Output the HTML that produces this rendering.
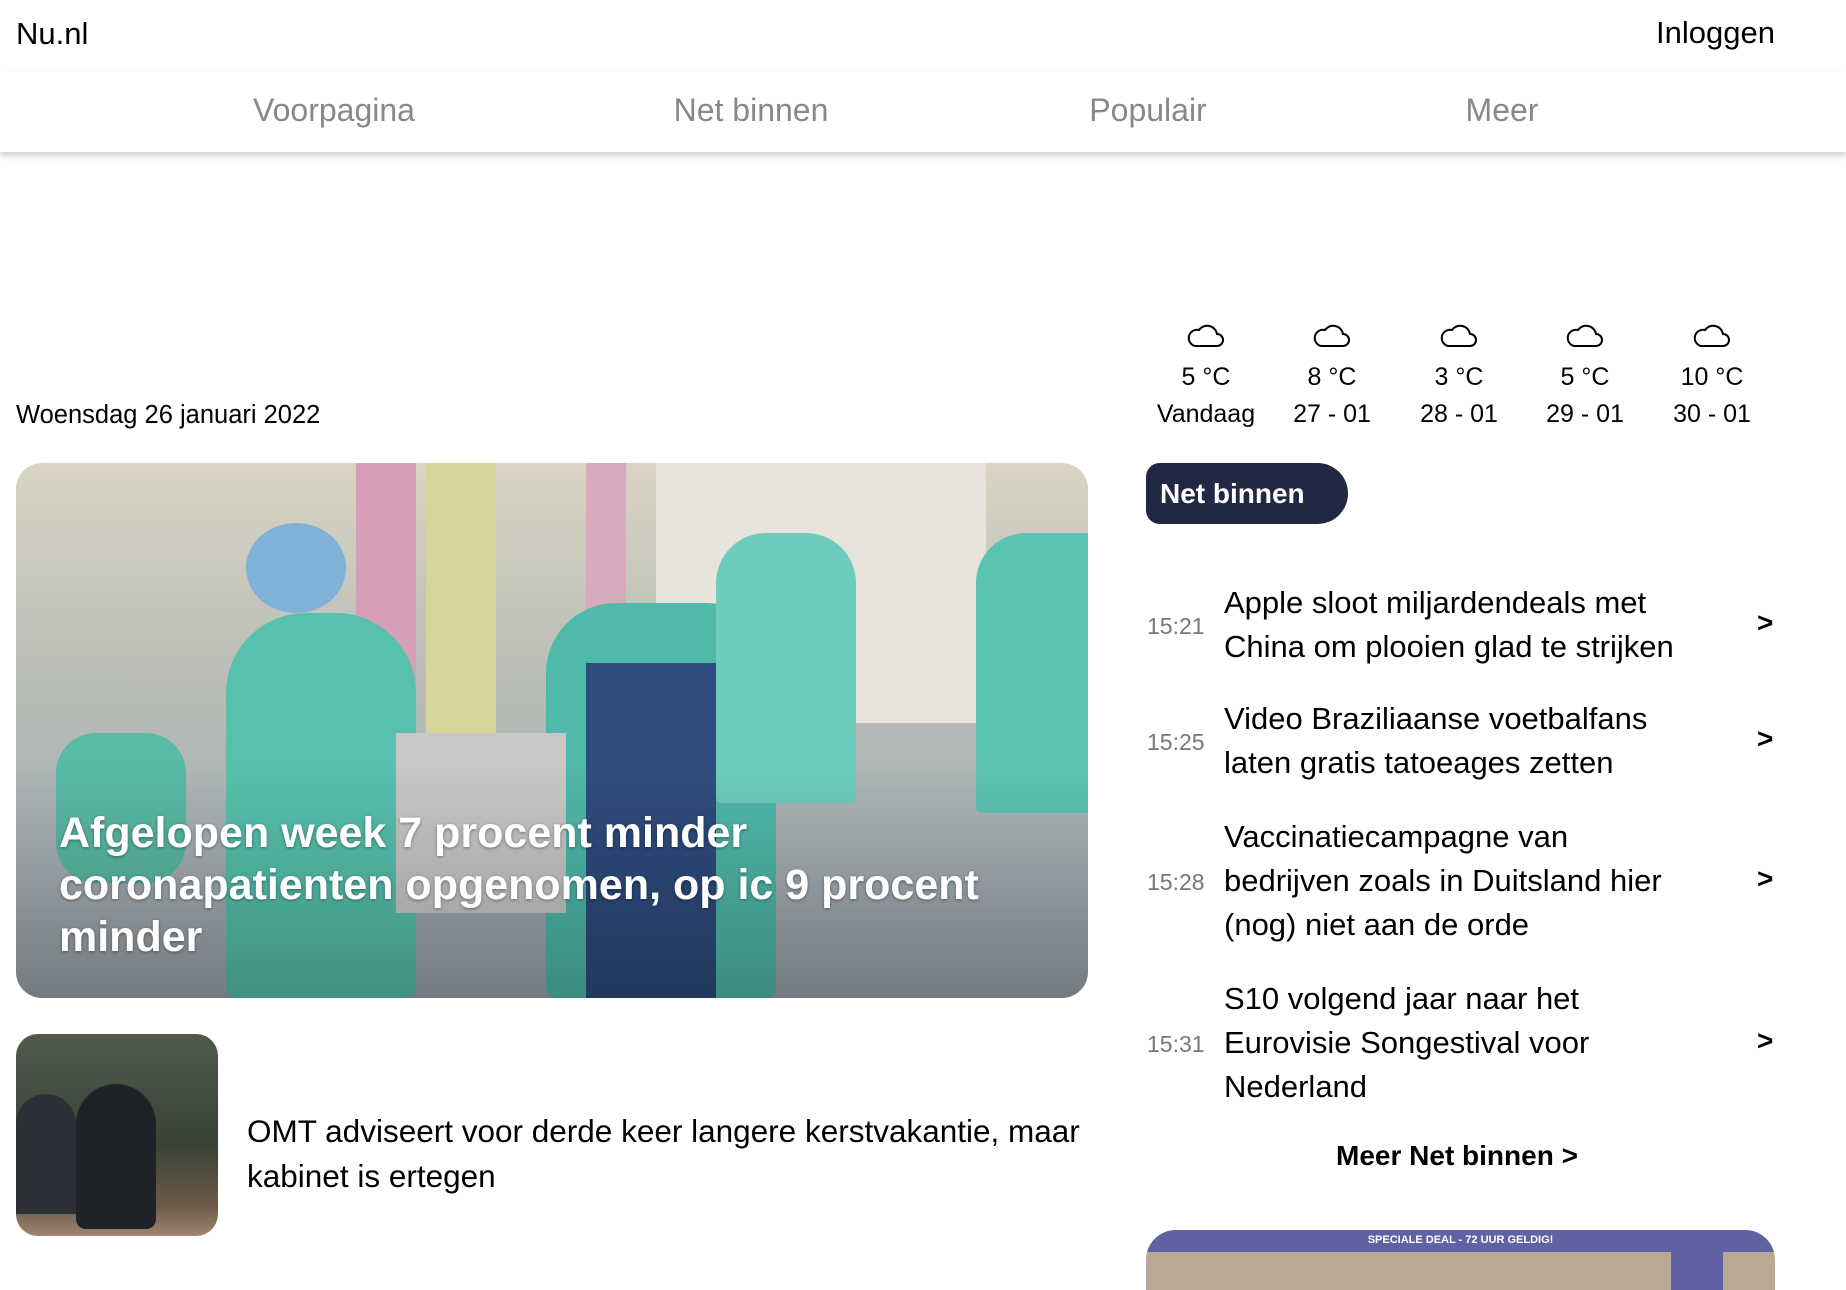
<!DOCTYPE html>
<html><head><meta charset="utf-8"><style>
*{margin:0;padding:0;box-sizing:border-box}
body{width:1846px;height:1264px;overflow:hidden;background:#fff;font-family:"Liberation Sans",Arial,sans-serif;color:#000;position:relative}
.a{position:absolute;white-space:nowrap}
.nav{position:absolute;left:0;top:72px;width:1846px;height:80px;background:#fff;box-shadow:0 4px 6px rgba(0,0,0,.18)}
.nav span{position:absolute;top:20px;font-size:32px;color:#888;transform:translateX(-50%)}
.wc{position:absolute;width:140px;text-align:center;font-size:25px;line-height:37px}
.t{position:absolute;left:1147px;font-size:23px;color:#777}
.h{position:absolute;left:1224px;font-size:31px;line-height:44px;white-space:nowrap}
.ar{position:absolute;left:1757px;font-size:28px;font-weight:bold}
</style></head><body>
<div class="a" style="left:16px;top:16px;font-size:31px">Nu.nl</div>
<div class="a" style="right:71px;top:15px;font-size:31px">Inloggen</div>
<div class="nav">
<span style="left:334px">Voorpagina</span>
<span style="left:751px">Net binnen</span>
<span style="left:1148px">Populair</span>
<span style="left:1502px">Meer</span>
</div>
<div class="a" style="left:16px;top:401px;font-size:25.5px">Woensdag 26 januari 2022</div>

<!-- weather -->
<div class="wc" style="left:1136px;top:322px"><svg width="38" height="26" viewBox="0 0 38 26"><path d="M8 24 H30 A6 6 0 0 0 30 12 A10 10 0 0 0 12 8 A8 8 0 0 0 8 24 Z" fill="none" stroke="#000" stroke-width="2"/></svg><br>5 °C<br>Vandaag</div>
<div class="wc" style="left:1262px;top:322px"><svg width="38" height="26" viewBox="0 0 38 26"><path d="M8 24 H30 A6 6 0 0 0 30 12 A10 10 0 0 0 12 8 A8 8 0 0 0 8 24 Z" fill="none" stroke="#000" stroke-width="2"/></svg><br>8 °C<br>27 - 01</div>
<div class="wc" style="left:1389px;top:322px"><svg width="38" height="26" viewBox="0 0 38 26"><path d="M8 24 H30 A6 6 0 0 0 30 12 A10 10 0 0 0 12 8 A8 8 0 0 0 8 24 Z" fill="none" stroke="#000" stroke-width="2"/></svg><br>3 °C<br>28 - 01</div>
<div class="wc" style="left:1515px;top:322px"><svg width="38" height="26" viewBox="0 0 38 26"><path d="M8 24 H30 A6 6 0 0 0 30 12 A10 10 0 0 0 12 8 A8 8 0 0 0 8 24 Z" fill="none" stroke="#000" stroke-width="2"/></svg><br>5 °C<br>29 - 01</div>
<div class="wc" style="left:1642px;top:322px"><svg width="38" height="26" viewBox="0 0 38 26"><path d="M8 24 H30 A6 6 0 0 0 30 12 A10 10 0 0 0 12 8 A8 8 0 0 0 8 24 Z" fill="none" stroke="#000" stroke-width="2"/></svg><br>10 °C<br>30 - 01</div>

<!-- hero -->
<div style="position:absolute;left:16px;top:463px;width:1072px;height:535px;border-radius:26px;overflow:hidden;background:linear-gradient(180deg,#d9d4c4 0%,#b9bdb5 40%,#a9b2b6 70%,#9aa3ab 100%)">
<div style="position:absolute;left:340px;top:0;width:60px;height:330px;background:#d79fb7"></div>
<div style="position:absolute;left:410px;top:0;width:70px;height:300px;background:#d8d59a"></div>
<div style="position:absolute;left:570px;top:0;width:40px;height:320px;background:#d9a9bd"></div>
<div style="position:absolute;left:640px;top:0;width:330px;height:260px;background:#e8e4dc"></div>
<div style="position:absolute;left:210px;top:150px;width:190px;height:385px;background:#57c1ae;border-radius:80px 80px 10px 10px"></div>
<div style="position:absolute;left:230px;top:60px;width:100px;height:90px;background:#7fb2d6;border-radius:50%"></div>
<div style="position:absolute;left:530px;top:140px;width:230px;height:395px;background:#4fb9aa;border-radius:70px 70px 10px 10px"></div>
<div style="position:absolute;left:570px;top:200px;width:130px;height:335px;background:#2e4c7e"></div>
<div style="position:absolute;left:700px;top:70px;width:140px;height:270px;background:#6dccbc;border-radius:50px 50px 6px 6px"></div>
<div style="position:absolute;left:960px;top:70px;width:112px;height:280px;background:#5dc3b2;border-radius:50px 0 0 6px"></div>
<div style="position:absolute;left:40px;top:270px;width:130px;height:150px;background:#59baa5;border-radius:40px"></div>
<div style="position:absolute;left:380px;top:270px;width:170px;height:180px;background:#c9c8c8"></div>
<div style="position:absolute;left:0;top:300px;width:1072px;height:235px;background:linear-gradient(180deg,rgba(0,0,0,0),rgba(0,0,0,.25))"></div>
<div style="position:absolute;left:43px;top:344px;width:1020px;color:#fff;font-weight:bold;font-size:43px;line-height:52px;text-shadow:0 1px 3px rgba(0,0,0,.4)">Afgelopen week 7 procent minder<br>coronapatienten opgenomen, op ic 9 procent<br>minder</div>
</div>

<!-- thumb -->
<div style="position:absolute;left:16px;top:1034px;width:202px;height:202px;border-radius:22px;overflow:hidden;background:linear-gradient(180deg,#4f5a4c 0%,#3a4237 55%,#6b5a4a 85%,#a08570 100%)">
<div style="position:absolute;left:0;top:60px;width:60px;height:120px;background:#2b2f36;border-radius:30px 30px 0 0"></div>
<div style="position:absolute;left:60px;top:50px;width:80px;height:145px;background:#1f2328;border-radius:40px 40px 10px 10px"></div>
</div>
<div class="a" style="left:247px;top:1109px;font-size:31.5px;line-height:45px">OMT adviseert voor derde keer langere kerstvakantie, maar<br>kabinet is ertegen</div>

<!-- net binnen -->
<div class="a" style="left:1146px;top:463px;width:202px;height:61px;background:#212844;border-radius:14px 31px 31px 14px;color:#fff;font-weight:bold;font-size:28px;line-height:61px;padding-left:14px">Net binnen</div>

<div class="t" style="top:613px">15:21</div>
<div class="h" style="top:581px">Apple sloot miljardendeals met<br>China om plooien glad te strijken</div>
<div class="ar" style="top:607px">&gt;</div>

<div class="t" style="top:729px">15:25</div>
<div class="h" style="top:697px">Video Braziliaanse voetbalfans<br>laten gratis tatoeages zetten</div>
<div class="ar" style="top:723px">&gt;</div>

<div class="t" style="top:869px">15:28</div>
<div class="h" style="top:815px">Vaccinatiecampagne van<br>bedrijven zoals in Duitsland hier<br>(nog) niet aan de orde</div>
<div class="ar" style="top:863px">&gt;</div>

<div class="t" style="top:1031px">15:31</div>
<div class="h" style="top:977px">S10 volgend jaar naar het<br>Eurovisie Songestival voor<br>Nederland</div>
<div class="ar" style="top:1025px">&gt;</div>

<div class="a" style="left:1336px;top:1140px;font-size:28px;font-weight:bold">Meer Net binnen &gt;</div>

<!-- ad -->
<div style="position:absolute;left:1146px;top:1230px;width:629px;height:60px;border-radius:30px 30px 0 0;overflow:hidden;background:#b9a994">
<div style="position:absolute;left:0;top:0;width:629px;height:22px;background:#5f62a3;color:#fff;font-size:11px;font-weight:bold;text-align:center;line-height:20px">SPECIALE DEAL - 72 UUR GELDIG!</div>
<div style="position:absolute;left:525px;top:0;width:52px;height:60px;background:#5f62a3"></div>
</div>
</body></html>
